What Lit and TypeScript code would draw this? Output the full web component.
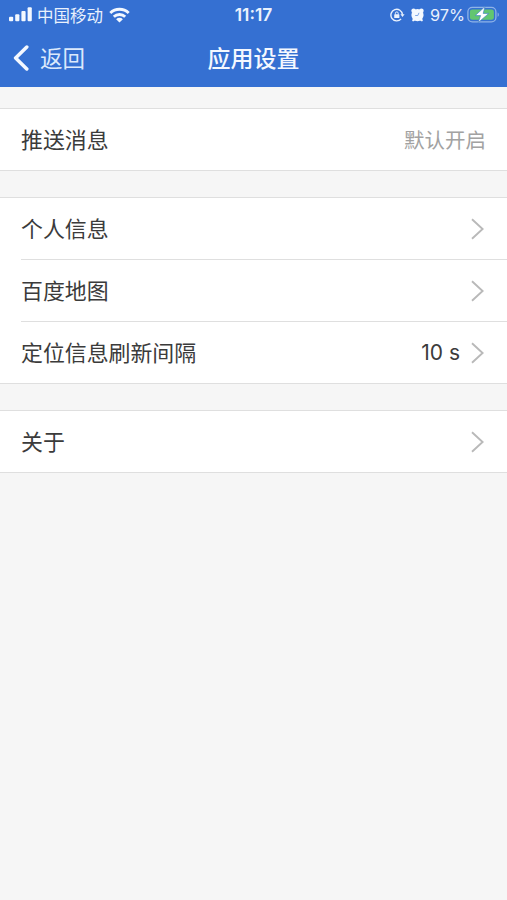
import { LitElement, html, css, nothing } from "lit";
import { customElement, property } from "lit/decorators.js";

const chevron = html`<svg width="14" height="22" viewBox="0 0 14 22" fill="none" stroke="#b9b9b9" stroke-width="1.9">
  <path d="M1 1.2 11.6 11 1 20.8" />
</svg>`;

@customElement("status-bar")
export class StatusBar extends LitElement {
  static styles = css`
    :host {
      display: grid;
      grid-template-columns: 1fr auto 1fr;
      align-items: center;
      height: 29px;
      color: #e9f1fd;
      font-size: 16.5px;
      line-height: 28px;
    }
    svg { display: block; flex: none; }
    .left { display: flex; align-items: center; height: 28px; padding-left: 9px; }
    .carrier { margin: 0 6px 0 5px; font-size: 16.5px; }
    .time { font-family: Inter, sans-serif; font-weight: 600; font-size: 17.4px; line-height: 29px; }
    .right { display: flex; align-items: center; justify-content: flex-end; height: 28px; padding-right: 7px; }
    .alarm { margin: 0 6px 0 6px; }
    .percent { font-family: Inter, sans-serif; font-size: 16.3px; line-height: 28px; width: 34px; margin-right: 3px; white-space: nowrap; }
  `;

  render() {
    return html`
      <div class="left">
        <svg width="23" height="15" viewBox="0 0 23 15" fill="#f3f8ff">
          <rect x="0" y="9.7" width="4.2" height="4.5" rx="1" />
          <rect x="6.2" y="7.2" width="4.2" height="7" rx="1" />
          <rect x="12.4" y="4" width="4.2" height="10.2" rx="1" />
          <rect x="18.6" y="0.2" width="4.2" height="14" rx="1" />
        </svg>
        <span class="carrier">中国移动</span>
        <svg width="21" height="16" viewBox="0 0 21 16" fill="none" stroke="#f3f8ff" stroke-width="2.9">
          <path d="M1.3 6a13.3 13.3 0 0 1 18.4 0" />
          <path d="M4.8 9.8a8.2 8.2 0 0 1 11.4 0" />
          <path d="M10.5 15.6 7.1 12.2a4.9 4.9 0 0 1 6.8 0z" fill="#f3f8ff" stroke="none" />
        </svg>
      </div>
      <span class="time">11:17</span>
      <div class="right">
        <svg width="15" height="14" viewBox="0 0 15 14" fill="none" stroke="#e9f1fd" stroke-width="1.4">
          <path d="M11.1 10.9A5.8 5.8 0 1 1 12.5 6.6" />
          <path d="M10.4 6.3h4.2L12.5 9z" fill="#e9f1fd" stroke="none" />
          <rect x="4.2" y="6.3" width="5.2" height="3.8" rx=".6" fill="#e9f1fd" stroke="none" />
          <path d="M5.4 6.6V5.3a1.4 1.4 0 0 1 2.8 0v1.3" stroke-width="1" />
        </svg>
        <svg class="alarm" width="13" height="14" viewBox="0 0 13 14">
          <g fill="#f3f8ff">
            <circle cx="6.5" cy="7.1" r="6.1" />
            <circle cx="2.6" cy="2.8" r="2.3" />
            <circle cx="10.4" cy="2.8" r="2.3" />
            <path d="m2 10-.9 2.7 1 .9 2.6-1.6zM11 10l.9 2.7-1 .9-2.6-1.6z" />
          </g>
          <path d="M4.2 7.5h2.6L8 4.8" fill="none" stroke="#6f9ce2" stroke-width=".9" />
        </svg>
        <span class="percent">97%</span>
        <svg width="33" height="17" viewBox="0 0 33 17">
          <rect x=".9" y="1.4" width="28" height="14.4" rx="4.4" fill="none" stroke="#8fb3e8" stroke-width="1.3" />
          <rect x="2.9" y="3.4" width="24" height="10.4" rx="2.4" fill="#62c670" />
          <path d="M30.6 6.4c1.6.6 1.6 3.8 0 4.4z" fill="#8fb3e8" />
          <path d="M18 .6 8.2 9.6h5.4L11.2 16.6 21.8 7.4h-5.6z" fill="#fff" stroke="#4384c4" stroke-width=".7" />
        </svg>
      </div>
    `;
  }
}

@customElement("nav-bar")
export class NavBar extends LitElement {
  static styles = css`
    :host {
      display: grid;
      grid-template-columns: 1fr auto 1fr;
      align-items: center;
      height: 58px;
      color: #f4f8ff;
      line-height: 56px;
    }
    .back { display: flex; align-items: center; gap: 11px; padding-left: 13px; font-size: 22.5px; color: #dce9fc; }
    .back span, .title { padding-bottom: 2px; }
    .title { font-size: 23px; font-weight: 500; }
    svg { display: block; }
  `;

  render() {
    return html`
      <div class="back">
        <svg width="16" height="26" viewBox="0 0 16 26" fill="none" stroke="#f4f8ff" stroke-width="3.5" stroke-linecap="round" stroke-linejoin="round">
          <path d="M13.8 2 2.6 13 13.8 24" />
        </svg>
        <span>返回</span>
      </div>
      <span class="title">应用设置</span>
    `;
  }
}

@customElement("setting-row")
export class SettingRow extends LitElement {
  @property() label = "";
  @property() value = "";
  @property({ type: Boolean }) link = false;

  static styles = css`
    :host {
      display: flex;
      align-items: center;
      height: 61px;
      padding: 0 22px 0 21px;
      color: #3b3b3b;
      font-size: 21.9px;
      line-height: 58px;
    }
    .label { flex: 1; padding-bottom: 2px; }
    .hint { color: #a2a2a2; font-size: 20.5px; margin-right: -1px; padding-bottom: 2px; }
    .amount { font-family: Inter, sans-serif; font-size: 21px; margin-right: 11px; }
    svg { display: block; }
  `;

  render() {
    return html`
      <span class="label">${this.label}</span>
      ${this.value ? html`<span class=${this.link ? "amount" : "hint"}>${this.value}</span>` : nothing}
      ${this.link ? chevron : nothing}
    `;
  }
}

@customElement("app-root")
export class AppRoot extends LitElement {
  static styles = css`
    :host {
      display: flex;
      flex-direction: column;
      height: 900px;
      background: #f6f6f6;
      font-family: "Noto Sans CJK SC", sans-serif;
    }
    header { background: #3570d2; margin-bottom: 21px; }
    .group {
      background: #fff;
      border-top: 1px solid #dfdfdf;
      border-bottom: 1px solid #dfdfdf;
      margin-bottom: 26px;
    }
    .divider { height: 1px; margin-left: 21px; background: #dfdfdf; }
  `;

  render() {
    return html`
      <header>
        <status-bar></status-bar>
        <nav-bar></nav-bar>
      </header>
      <section class="group">
        <setting-row label="推送消息" value="默认开启"></setting-row>
      </section>
      <section class="group">
        <setting-row label="个人信息" link></setting-row>
        <div class="divider"></div>
        <setting-row label="百度地图" link></setting-row>
        <div class="divider"></div>
        <setting-row label="定位信息刷新间隔" value="10 s" link></setting-row>
      </section>
      <section class="group">
        <setting-row label="关于" link></setting-row>
      </section>
    `;
  }
}
